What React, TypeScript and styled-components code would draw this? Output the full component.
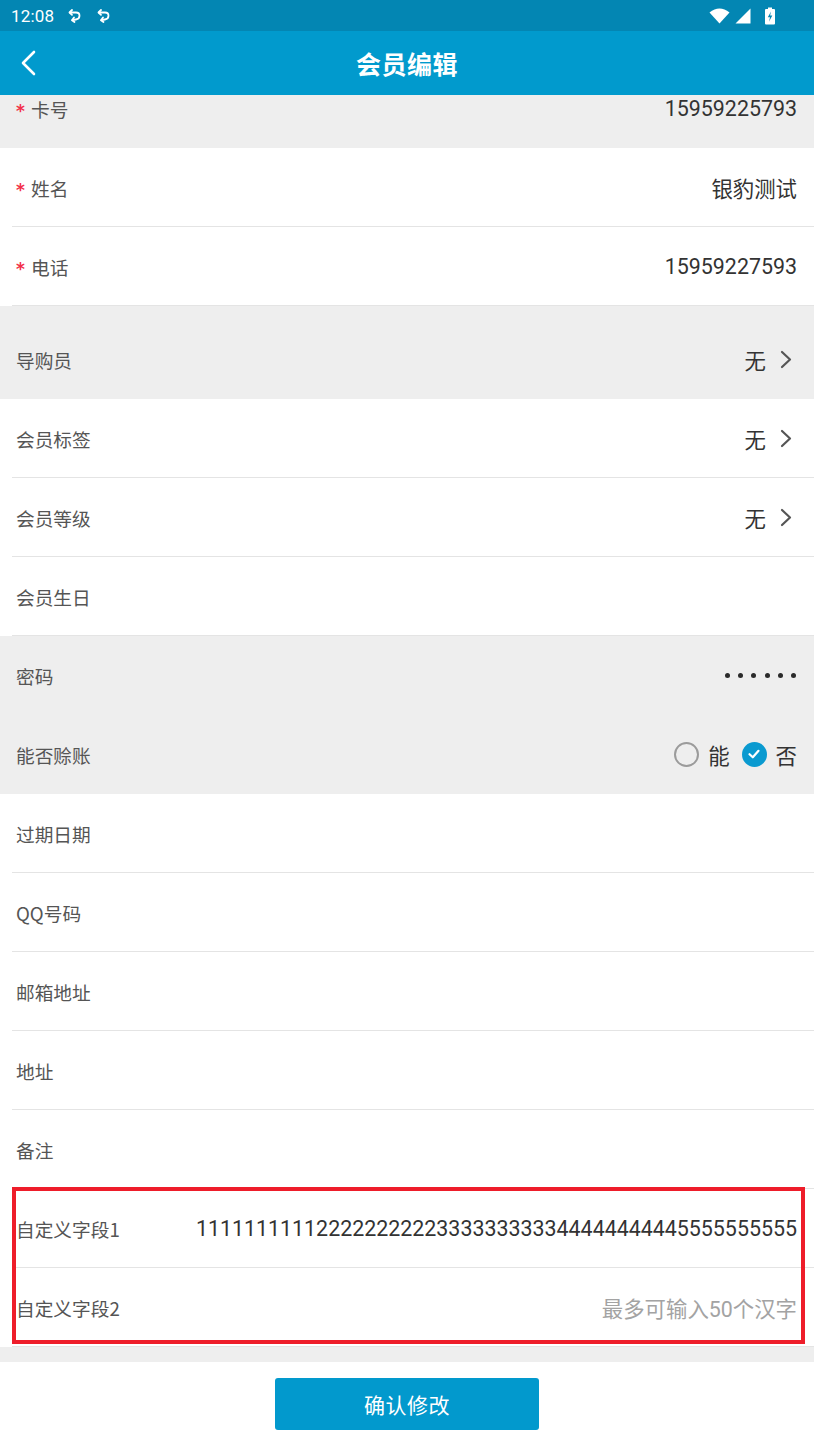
import React from 'react';
import styled, { createGlobalStyle } from 'styled-components';

const GlobalStyle = createGlobalStyle`
  html, body { margin: 0; padding: 0; }
  body {
    font-family: Roboto, "Noto Sans CJK SC", sans-serif;
    background: #eeeeee;
  }
  * { box-sizing: border-box; }
`;

const Screen = styled.div`
  width: 814px;
  height: 1446px;
  display: flex;
  flex-direction: column;
  overflow: hidden;
  background: #eeeeee;
`;

const StatusBar = styled.div`
  flex: none;
  height: 31px;
  background: #0386b3;
  color: #fff;
  display: flex;
  align-items: center;
  justify-content: space-between;
  padding: 0 38px 0 11px;
`;

const StatusLeft = styled.div`
  display: flex;
  align-items: center;
  gap: 12px;
  font-size: 17px;
  font-family: Roboto, sans-serif;
  letter-spacing: 0.2px;
`;

const StatusRight = styled.div`
  display: flex;
  align-items: center;
  gap: 5px;
`;

const Header = styled.header`
  flex: none;
  height: 64px;
  background: #019acd;
  display: grid;
  grid-template-columns: 64px 1fr 64px;
  align-items: center;
`;

const BackButton = styled.div`
  display: flex;
  align-items: center;
  padding-left: 19px;
`;

const Title = styled.h1`
  margin: 0;
  text-align: center;
  color: #fff;
  font-size: 25px;
  font-weight: 700;
  font-family: "Noto Sans CJK SC", sans-serif;
  letter-spacing: 0.5px;
`;

const Content = styled.main`
  flex: 1;
  overflow: hidden;
  background: #eeeeee;
`;

const List = styled.div`
  display: flex;
  flex-direction: column;
  margin-top: -26px;
`;

const Group = styled.section<{ $gapBelow?: number }>`
  display: flex;
  flex-direction: column;
  margin-bottom: ${p => p.$gapBelow ?? 0}px;
`;

const Row = styled.div<{ $muted?: boolean }>`
  height: 79px;
  background: ${p => (p.$muted ? '#eeeeee' : '#ffffff')};
  display: flex;
`;

const RowInner = styled.div<{ $divider?: boolean }>`
  flex: 1;
  margin-left: 12px;
  display: flex;
  align-items: center;
  justify-content: space-between;
  padding: 0 17px 0 4px;
  border-bottom: 1px solid ${p => (p.$divider ? '#e4e4e4' : 'transparent')};
`;

const Label = styled.span`
  display: flex;
  align-items: center;
  font-size: 18.7px;
  color: #555555;
  font-family: "Noto Sans CJK SC", sans-serif;
  white-space: nowrap;
`;

const Star = styled.span`
  color: #f2304a;
  font-size: 17px;
  font-weight: 700;
  width: 15px;
  font-family: "DejaVu Sans", sans-serif;
  padding-top: 7px;
  line-height: 1;
`;

const Value = styled.span<{ $placeholder?: boolean }>`
  font-size: 21.4px;
  color: ${p => (p.$placeholder ? '#a3a3a3' : '#333333')};
  white-space: nowrap;
`;

const Picker = styled.span`
  display: flex;
  align-items: center;
  gap: 14px;
  padding-right: 5px;
`;

const Dots = styled.span`
  display: flex;
  gap: 8.2px;
  padding-right: 1px;
`;

const Dot = styled.span`
  width: 5px;
  height: 5px;
  border-radius: 50%;
  background: #2a2a2a;
`;

const RadioGroup = styled.span`
  display: flex;
  align-items: center;
`;

const RadioOption = styled.span`
  display: flex;
  align-items: center;
  gap: 9px;
  & + & { margin-left: 12px; }
`;

const RadioCircle = styled.span<{ $checked?: boolean }>`
  width: 25px;
  height: 25px;
  border-radius: 50%;
  border: ${p => (p.$checked ? 'none' : '2.5px solid #9b9b9b')};
  background: ${p => (p.$checked ? '#0a9ad0' : 'transparent')};
  display: inline-flex;
  align-items: center;
  justify-content: center;
`;

const Highlight = styled.div`
  position: relative;
  display: flex;
  flex-direction: column;
  &::after {
    content: '';
    position: absolute;
    left: 12px;
    right: 9px;
    top: -2px;
    bottom: 3px;
    border: 4px solid #ee1d2a;
    pointer-events: none;
  }
`;

const Footer = styled.footer`
  flex: none;
  height: 84px;
  background: #fff;
  display: flex;
  justify-content: center;
  padding-top: 16px;
`;

const ConfirmButton = styled.button`
  width: 264px;
  height: 52px;
  border: none;
  border-radius: 3px;
  background: #0299cd;
  color: #fff;
  font-size: 21px;
  font-family: "Noto Sans CJK SC", sans-serif;
  letter-spacing: 0.5px;
`;

const SyncIcon = () => (
  <svg width="17" height="16" viewBox="0 0 17 16" fill="none" stroke="#fff" strokeWidth="1.8" strokeLinecap="round" strokeLinejoin="round">
    <path d="M4 4.5 H10 Q13.5 4.5 13.5 7.8 Q13.5 11 10 11.5 L6.5 12" />
    <path d="M6 2 L3.5 4.5 L6 6.8" />
    <path d="M8 9.5 L6 12.2 L8.5 14" />
  </svg>
);

const WifiIcon = () => (
  <svg width="21" height="16" viewBox="0 0 21 16">
    <path d="M0.5 4.5 Q10.5 -3.5 20.5 4.5 L10.5 15.5 Z" fill="#fff" />
  </svg>
);

const SignalIcon = () => (
  <svg width="16" height="16" viewBox="0 0 16 16">
    <path d="M15.5 0.5 V15.5 H0.5 Z" fill="#fff" />
  </svg>
);

const BatteryIcon = () => (
  <svg width="12" height="18" viewBox="0 0 12 18">
    <rect x="4" y="0.5" width="4" height="2" fill="#fff" />
    <rect x="1" y="2" width="10" height="15.5" rx="1" fill="#fff" />
    <path d="M7 4.5 L3.8 10.2 H6 L5 14.8 L8.3 8.6 H6.1 Z" fill="#0386b3" />
  </svg>
);

const BackIcon = () => (
  <svg width="18" height="26" viewBox="0 0 18 26" fill="none" stroke="#fff" strokeWidth="2.6" strokeLinecap="round" strokeLinejoin="round">
    <path d="M15 2 L4 13 L15 24" />
  </svg>
);

const Chevron = () => (
  <svg width="12" height="19" viewBox="0 0 12 19" fill="none" stroke="#555" strokeWidth="2.2" strokeLinecap="round" strokeLinejoin="round">
    <path d="M2 2 L10 9.5 L2 17" />
  </svg>
);

const CheckMark = () => (
  <svg width="14" height="14" viewBox="0 0 14 14" fill="none" stroke="#fff" strokeWidth="2.2" strokeLinecap="round" strokeLinejoin="round">
    <path d="M2.5 7.2 L5.8 10.3 L11.5 3.8" />
  </svg>
);

type Field = {
  label: string;
  required?: boolean;
  value?: string;
  picker?: boolean;
  muted?: boolean;
  divider?: boolean;
  placeholder?: string;
};

const FieldRow: React.FC<{ f: Field }> = ({ f }) => (
  <Row $muted={f.muted}>
    <RowInner $divider={f.divider}>
      <Label>
        {f.required && <Star>*</Star>}
        {f.label}
      </Label>
      {f.picker ? (
        <Picker>
          <Value>{f.value}</Value>
          <Chevron />
        </Picker>
      ) : f.placeholder ? (
        <Value $placeholder>{f.placeholder}</Value>
      ) : f.value ? (
        <Value>{f.value}</Value>
      ) : null}
    </RowInner>
  </Row>
);

const topGroup: Field[] = [
  { label: '卡号', required: true, value: '15959225793', muted: true },
  { label: '姓名', required: true, value: '银豹测试', divider: true },
  { label: '电话', required: true, value: '15959227593', divider: true },
];

const midGroup: Field[] = [
  { label: '导购员', value: '无', picker: true, muted: true },
  { label: '会员标签', value: '无', picker: true, divider: true },
  { label: '会员等级', value: '无', picker: true, divider: true },
  { label: '会员生日', divider: true },
];

const lowerFields: Field[] = [
  { label: '过期日期', divider: true },
  { label: 'QQ号码', divider: true },
  { label: '邮箱地址', divider: true },
  { label: '地址', divider: true },
  { label: '备注', divider: true },
];

const customFields: Field[] = [
  { label: '自定义字段1', value: '11111111112222222222333333333344444444445555555555', divider: true },
  { label: '自定义字段2', placeholder: '最多可输入50个汉字', divider: true },
];

export default function App() {
  return (
    <>
      <GlobalStyle />
      <Screen>
        <StatusBar>
          <StatusLeft>
            <span>12:08</span>
            <SyncIcon />
            <SyncIcon />
          </StatusLeft>
          <StatusRight>
            <WifiIcon />
            <SignalIcon />
            <span style={{ width: 3 }} />
            <BatteryIcon />
          </StatusRight>
        </StatusBar>
        <Header>
          <BackButton>
            <BackIcon />
          </BackButton>
          <Title>会员编辑</Title>
          <span />
        </Header>
        <Content>
          <List>
            <Group $gapBelow={14}>
              {topGroup.map(f => (
                <FieldRow key={f.label} f={f} />
              ))}
            </Group>
            <Group>
              {midGroup.map(f => (
                <FieldRow key={f.label} f={f} />
              ))}
              <Row $muted>
                <RowInner>
                  <Label>密码</Label>
                  <Dots>
                    {Array.from({ length: 6 }).map((_, i) => (
                      <Dot key={i} />
                    ))}
                  </Dots>
                </RowInner>
              </Row>
              <Row $muted>
                <RowInner>
                  <Label>能否赊账</Label>
                  <RadioGroup>
                    <RadioOption>
                      <RadioCircle />
                      <Value>能</Value>
                    </RadioOption>
                    <RadioOption>
                      <RadioCircle $checked>
                        <CheckMark />
                      </RadioCircle>
                      <Value>否</Value>
                    </RadioOption>
                  </RadioGroup>
                </RowInner>
              </Row>
              {lowerFields.map(f => (
                <FieldRow key={f.label} f={f} />
              ))}
              <Highlight>
                {customFields.map(f => (
                  <FieldRow key={f.label} f={f} />
                ))}
              </Highlight>
            </Group>
          </List>
        </Content>
        <Footer>
          <ConfirmButton>确认修改</ConfirmButton>
        </Footer>
      </Screen>
    </>
  );
}
